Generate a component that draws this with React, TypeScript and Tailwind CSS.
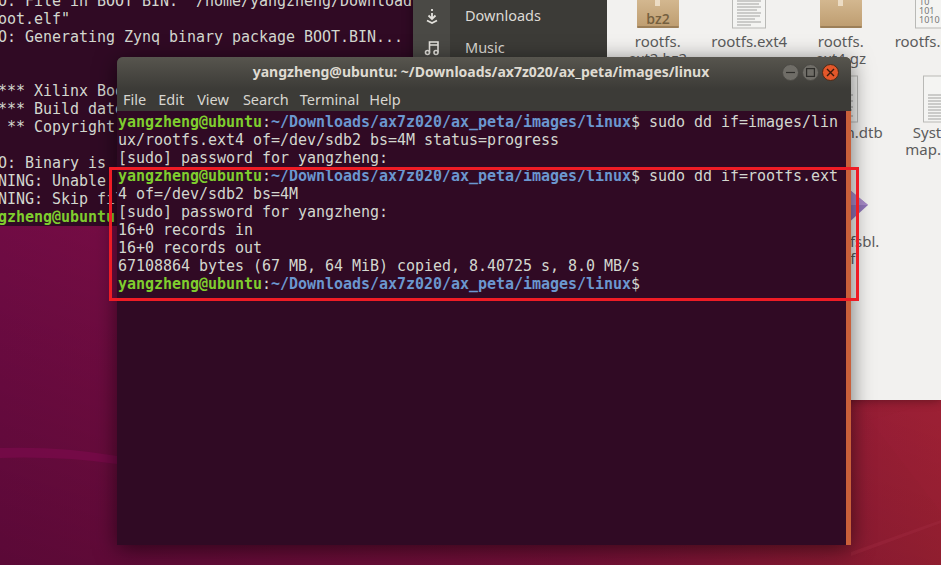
import type { ReactNode } from "react";

const PROMPT_PATH = "~/Downloads/ax7z020/ax_peta/images/linux";

const backLines = [
  'O: File in BOOT BIN: "/home/yangzheng/Download',
  'oot.elf"',
  "O: Generating Zynq binary package BOOT.BIN...",
  "",
  "",
  "*** Xilinx Bootgen",
  "*** Build date",
  " ** Copyright",
  "",
  "O: Binary is ready.",
  "NING: Unable",
  "NING: Skip file",
];

const Prompt = ({ path = PROMPT_PATH }: { path?: string }) => (
  <>
    <span className="font-bold text-[#7fce2e]">yangzheng@ubuntu</span>
    <span>:</span>
    <span className="font-bold text-[#6b97cf]">{path}</span>
    <span>$</span>
  </>
);

const Line = ({ children }: { children?: ReactNode }) => (
  <div className="h-[18px] whitespace-pre leading-[18px]">{children}</div>
);

const PackageIcon = ({ label }: { label?: string }) => (
  <svg width="44" height="48" viewBox="0 0 44 48">
    <defs>
      <linearGradient id="box" x1="0" y1="0" x2="0" y2="1">
        <stop offset="0" stopColor="#dcc29c" />
        <stop offset="1" stopColor="#bd9c6f" />
      </linearGradient>
    </defs>
    <rect x="1" y="8" width="42" height="39" rx="2" fill="url(#box)" />
    <rect x="1" y="45" width="42" height="2" rx="1" fill="#9c7f58" />
    <rect x="19" y="8" width="5" height="17" fill="#ecdcc4" />
    {label && (
      <text x="22" y="43" textAnchor="middle" fontSize="14" fontWeight="600" fill="#75603f" fontFamily="Open Sans, sans-serif">
        {label}
      </text>
    )}
  </svg>
);

const DocIcon = ({ binary }: { binary?: boolean }) => (
  <svg width="36" height="48" viewBox="0 0 36 48">
    <rect x="1.5" y="1" width="33" height="46" fill="#f4f4f2" stroke="#b9b9b6" />
    {binary ? (
      <g fontSize="9" fill="#777" fontFamily="Noto Sans, sans-serif">
        <text x="5" y="24">10</text>
        <text x="5" y="33">101</text>
        <text x="5" y="42">1010</text>
      </g>
    ) : (
      <g stroke="#a2a2a0" strokeWidth="1">
        <path d="M6 20H30M6 23H28M6 26H30M6 29H26M6 32H30M6 35H29M6 38H24M6 41H30M6 44H20" />
      </g>
    )}
  </svg>
);

const DiamondIcon = () => (
  <svg width="48" height="48" viewBox="0 0 48 48">
    <path d="M24 2L47 21L24 42L1 21Z" fill="#8f74b8" />
    <path d="M24 2L47 21L24 21Z" fill="#a88bc9" />
  </svg>
);

const Tile = ({ icon, lines, gap }: { icon: ReactNode; lines: string[]; gap: string }) => (
  <div className={`flex w-[91.5px] shrink-0 flex-col items-center ${gap}`}>
    <div className="flex h-12 items-end justify-center">{icon}</div>
    <div className="text-center text-[15px] leading-[17px] text-[#5c5c5c]">
      {lines.map((l) => (
        <div key={l} className="whitespace-nowrap">
          {l}
        </div>
      ))}
    </div>
  </div>
);

const SideRow = ({ icon, label }: { icon: ReactNode; label: string }) => (
  <div className="flex h-8 items-center">
    <div className="flex w-[37px] justify-center">{icon}</div>
    <div className="pl-[15px] text-[14.5px] text-[#dcdad5]">{label}</div>
  </div>
);

const WinButton = ({ children, close }: { children: ReactNode; close?: boolean }) => (
  <div
    className={
      close
        ? "flex h-[17px] w-[17px] items-center justify-center rounded-full border border-[#4a2a18] bg-[#e4572a]"
        : "flex h-[17px] w-[17px] items-center justify-center rounded-full border border-[#4b4a45] bg-[#6f6d67]"
    }
  >
    {children}
  </div>
);

export default function App() {
  return (
    <div className="relative h-[565px] w-[941px] overflow-hidden bg-[linear-gradient(20deg,rgba(0,0,0,0.26)_0%,rgba(0,0,0,0)_55%),linear-gradient(90deg,#7a0c4a_0%,#84123f_60%,#9c2033_100%)] font-['DejaVu_Sans_Mono',monospace]">
      {/* wallpaper streaks */}
      <svg className="absolute left-0 top-0" width="941" height="565" viewBox="0 0 941 565" fill="none">
        <path d="M0 448Q60 446 117 456V464Q60 456 0 458Z" fill="#7a0a4c" opacity="0.7" />
        <path d="M851 552L941 520V523L851 556Z" fill="#a02a42" opacity="0.4" />
        <path d="M870 420L941 512L941 400Z" fill="#a3233a" opacity="0.15" />
      </svg>

      {/* back terminal */}
      <div className="absolute left-0 top-0 h-[226px] w-[413px] overflow-hidden bg-[#300a24] text-[15px] tracking-[-0.03px] text-[#d3d7cf]">
        <div className="-mt-[8px] -ml-[2px]">
          {backLines.map((l, i) => (
            <Line key={i}>{l}</Line>
          ))}
          <Line>
            <span className="font-bold text-[#7fce2e]">gzheng@ubuntu</span>
          </Line>
        </div>
      </div>

      {/* file manager */}
      <div className="absolute left-[413px] top-0 flex h-[400px] w-[528px] font-['Noto_Sans',sans-serif] shadow-[0_0_10px_rgba(0,0,0,0.4)]">
        <div className="w-[194px] shrink-0 bg-[linear-gradient(90deg,#4a4945_0,#4a4945_37px,#3c3b37_37px)]">
          <SideRow
            label="Downloads"
            icon={
              <svg width="16" height="16" viewBox="0 0 16 16" fill="none" stroke="#e4e2dd" strokeWidth="1.8">
                <path d="M8 1V3M8 5V10M4.5 7.5L8 11L11.5 7.5M3 12.5L8 15L13 12.5" />
              </svg>
            }
          />
          <SideRow
            label="Music"
            icon={
              <svg width="16" height="16" viewBox="0 0 16 16" fill="none" stroke="#e4e2dd" strokeWidth="1.6">
                <circle cx="3.5" cy="12.5" r="2" />
                <circle cx="12" cy="12.5" r="2" />
                <path d="M5.5 12.5V2H14V12.5M5.5 5H14" />
              </svg>
            }
          />
        </div>
        <div className="flex-1 overflow-hidden bg-[#f2f1ef] pl-[5px]">
          <div className="-mt-[19px] flex h-[94px]">
            <Tile gap="gap-[4px]" icon={<PackageIcon label="bz2" />} lines={["rootfs.", "ext2.bz2"]} />
            <Tile gap="gap-[4px]" icon={<DocIcon />} lines={["rootfs.ext4"]} />
            <Tile gap="gap-[4px]" icon={<PackageIcon />} lines={["rootfs.", "ext4.gz"]} />
            <Tile gap="gap-[4px]" icon={<DocIcon binary />} lines={["rootfs.cpio"]} />
          </div>
          <div className="flex h-[109px]">
            <Tile gap="gap-[1px]" icon={<DocIcon />} lines={["system.dtb"]} />
            <div className="w-[91.5px] shrink-0" />
            <Tile gap="gap-[1px]" icon={<DocIcon />} lines={["zynq-7n.dtb"]} />
            <div className="pl-[8px]">
              <Tile gap="gap-[1px]" icon={<DocIcon />} lines={["System.", "map.linux"]} />
            </div>
          </div>
          <div className="flex">
            <div className="w-[187px] shrink-0" />
            <Tile gap="gap-[1px]" icon={<DiamondIcon />} lines={["zynq_fsbl.", ".elf"]} />
          </div>
        </div>
      </div>

      {/* front terminal */}
      <div className="absolute left-[117px] top-[57px] flex h-[488px] w-[734px] flex-col rounded-t-[6px] bg-[#3c3b37] shadow-[0_4px_22px_rgba(0,0,0,0.55)]">
        <div className="relative flex h-[32px] shrink-0 items-center justify-center rounded-t-[6px] bg-[linear-gradient(180deg,#57554e_0%,#3c3b37_100%)] font-['Noto_Sans',sans-serif] text-[14px] font-bold text-[#dfdbd2]">
          <span className="mr-[6px] mt-[-3px]">yangzheng@ubuntu: {PROMPT_PATH}</span>
          <div className="absolute right-[12px] top-[7px] flex gap-[3px]">
            <WinButton>
              <svg width="9" height="9" viewBox="0 0 9 9" stroke="#2e2d2a" strokeWidth="1.2">
                <path d="M0 4.5H9" />
              </svg>
            </WinButton>
            <WinButton>
              <svg width="9" height="9" viewBox="0 0 9 9" fill="none" stroke="#2e2d2a" strokeWidth="1.2">
                <rect x="0.6" y="0.6" width="7.8" height="7.8" />
              </svg>
            </WinButton>
            <WinButton close>
              <svg width="9" height="9" viewBox="0 0 9 9" stroke="#3a1a0c" strokeWidth="1.4">
                <path d="M1 1L8 8M8 1L1 8" />
              </svg>
            </WinButton>
          </div>
        </div>
        <div className="flex h-[22px] shrink-0 items-center gap-[12px] pl-[6px] font-['Noto_Sans',sans-serif] text-[14.5px] text-[#d8d6d0]">
          <span>File</span>
          <span>Edit</span>
          <span className="ml-px">View</span>
          <span className="ml-[2px]">Search</span>
          <span className="-ml-px">Terminal</span>
          <span className="-ml-[2px]">Help</span>
        </div>
        <div className="flex flex-1">
          <div className="flex-1 bg-[#300a24] pl-px pt-[2px] text-[15px] tracking-[-0.03px] text-[#d3d7cf]">
            <Line>
              <Prompt /> sudo dd if=images/lin
            </Line>
            <Line>ux/rootfs.ext4 of=/dev/sdb2 bs=4M status=progress</Line>
            <Line>[sudo] password for yangzheng:</Line>
            <Line>
              <Prompt /> sudo dd if=rootfs.ext
            </Line>
            <Line>4 of=/dev/sdb2 bs=4M</Line>
            <Line>[sudo] password for yangzheng:</Line>
            <Line>16+0 records in</Line>
            <Line>16+0 records out</Line>
            <Line>67108864 bytes (67 MB, 64 MiB) copied, 8.40725 s, 8.0 MB/s</Line>
            <Line>
              <Prompt />
            </Line>
          </div>
          <div className="w-[5px] bg-[#c95f3a]" />
        </div>
      </div>

      {/* red annotation box */}
      <div className="absolute left-[109px] top-[167px] h-[134px] w-[750px] border-[3px] border-[#ee1c25]" />
    </div>
  );
}
